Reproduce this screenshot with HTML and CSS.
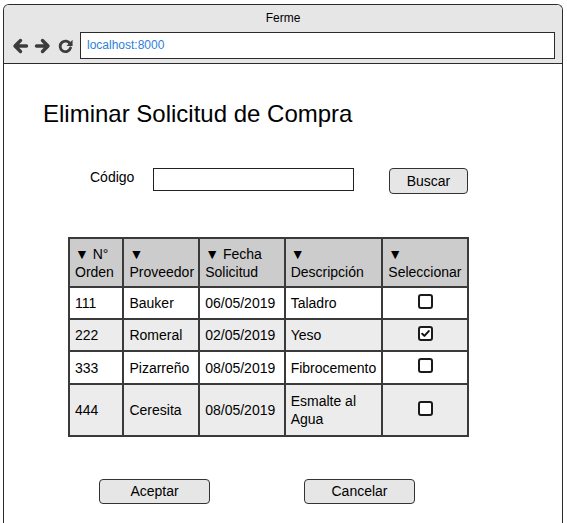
FILE: index.html
```html
<!DOCTYPE html>
<html lang="es">
<head>
<meta charset="utf-8">
<title>Ferme</title>
<link rel="stylesheet" href="styles.css">
</head>
<body>
<div class="window">
  <div class="chrome">
    <div class="win-title">Ferme</div>
    <div class="navrow">
      <div class="navicons">
        <svg class="ico" viewBox="0 0 18 18" width="18" height="18"><path d="M15.5 9H4.5M9.5 3.5L4 9l5.5 5.5" fill="none" stroke="#3c3c3c" stroke-width="3.4" stroke-linecap="round" stroke-linejoin="round"/></svg>
        <svg class="ico" viewBox="0 0 18 18" width="18" height="18"><path d="M2.5 9h11M8.5 3.5L14 9l-5.5 5.5" fill="none" stroke="#3c3c3c" stroke-width="3.4" stroke-linecap="round" stroke-linejoin="round"/></svg>
        <svg class="ico" viewBox="0 0 18 18" width="17" height="18"><path d="M14 7A5.6 5.6 0 1 0 14.3 11" fill="none" stroke="#3c3c3c" stroke-width="3" stroke-linecap="round"/><path d="M16.5 2.5v6.5H10z" fill="#3c3c3c"/></svg>
      </div>
      <div class="address">localhost:8000</div>
    </div>
  </div>
  <div class="content">
    <h1 class="page-title">Eliminar Solicitud de Compra</h1>
    <div class="search-row">
      <label class="code-label">Código</label>
      <div class="code-input"></div>
      <div class="btn btn-search">Buscar</div>
    </div>
    <table class="grid">
      <colgroup>
        <col class="c1"><col class="c2"><col class="c3"><col class="c4"><col class="c5">
      </colgroup>
      <thead>
        <tr>
          <th>▼ N°<br>Orden</th>
          <th>▼<br>Proveedor</th>
          <th>▼ Fecha<br>Solicitud</th>
          <th>▼<br>Descripción</th>
          <th>▼<br>Seleccionar</th>
        </tr>
      </thead>
      <tbody>
        <tr class="r1">
          <td>111</td><td>Bauker</td><td>06/05/2019</td><td>Taladro</td><td class="chk"><span class="box"></span></td>
        </tr>
        <tr class="r2">
          <td>222</td><td>Romeral</td><td>02/05/2019</td><td>Yeso</td><td class="chk"><span class="box checked"><svg viewBox="0 0 10 10" width="10" height="10"><path d="M2 5.2l2 2L8 2.8" fill="none" stroke="#111" stroke-width="1.8" stroke-linecap="round" stroke-linejoin="round"/></svg></span></td>
        </tr>
        <tr class="r3">
          <td>333</td><td>Pizarreño</td><td>08/05/2019</td><td>Fibrocemento</td><td class="chk"><span class="box"></span></td>
        </tr>
        <tr class="r4">
          <td>444</td><td>Ceresita</td><td>08/05/2019</td><td>Esmalte al<br>Agua</td><td class="chk"><span class="box"></span></td>
        </tr>
      </tbody>
    </table>
    <div class="actions">
      <div class="btn btn-action">Aceptar</div>
      <div class="btn btn-action btn-cancel">Cancelar</div>
    </div>
  </div>
</div>
</body>
</html>
```
FILE: styles.css
```css
html, body {
  margin: 0;
  padding: 0;
  background: #ffffff;
  font-family: "Liberation Sans", Arial, sans-serif;
  color: #000;
}
.window {
  margin: 4px 0 0 3px;
  width: 558px;
  height: 540px;
  border: 1px solid #2b2b2b;
  border-bottom: none;
  border-radius: 6px 6px 0 0;
  overflow: hidden;
  box-sizing: content-box;
}
.chrome {
  background: #e6e6e6;
  height: 59px;
  border-bottom: 1px solid #2b2b2b;
  box-sizing: border-box;
  display: flex;
  flex-direction: column;
}
.win-title {
  text-align: center;
  font-size: 12px;
  line-height: 14px;
  padding-top: 6px;
  height: 27px;
  box-sizing: border-box;
}
.navrow {
  display: flex;
  align-items: center;
  padding-left: 7px;
}
.navicons {
  display: flex;
  gap: 5px;
  align-items: center;
  margin-right: 6px;
}
.ico { display: block; }
.address {
  width: 475px;
  height: 27px;
  box-sizing: border-box;
  border: 1px solid #2b2b2b;
  background: #fff;
  color: #2d7fdb;
  font-size: 12px;
  line-height: 25px;
  padding-left: 6px;
}
.content {
  padding: 0;
}
.page-title {
  margin: 36px 0 0 39px;
  font-weight: normal;
  font-size: 24px;
  line-height: 28px;
}
.search-row {
  display: flex;
  align-items: flex-start;
  margin-top: 40px;
  height: 26px;
}
.code-label {
  margin-left: 86px;
  font-size: 14px;
  line-height: 16px;
  padding-top: 1px;
  width: 63px;
}
.code-input {
  width: 201px;
  height: 23px;
  box-sizing: border-box;
  border: 1px solid #222;
  background: #fff;
}
.btn {
  background: #e6e6e6;
  border: 1px solid #333;
  border-radius: 4px;
  box-sizing: border-box;
  text-align: center;
  font-size: 14px;
}
.btn-search {
  margin-left: 35px;
  width: 79px;
  height: 26px;
  line-height: 24px;
}
.grid {
  margin: 43px 0 0 64px;
  border-collapse: collapse;
  width: 401px;
  font-size: 14px;
}
.c1 { width: 55px; }
.c2 { width: 76px; }
.c3 { width: 86px; }
.c4 { width: 98px; }
.c5 { width: 86px; }
.grid th, .grid td {
  border: 2px solid #3a3a3a;
  padding: 0 0 0 5px;
  text-align: left;
  font-weight: normal;
  line-height: 18px;
  vertical-align: middle;
}
.grid thead tr { height: 49px; background: #cccccc; }
.grid th { padding-top: 0; }
.r1, .r3 { background: #ffffff; }
.r2, .r4 { background: #ececec; }
.r1 { height: 32px; }
.r2 { height: 32px; }
.r3 { height: 33px; }
.r4 { height: 52px; }
.grid td.chk {
  text-align: center;
  padding: 0;
}
.box {
  display: inline-block;
  width: 15px;
  height: 15px;
  box-sizing: border-box;
  border: 2px solid #1a1a1a;
  border-radius: 3px;
  background: #fff;
  vertical-align: middle;
  position: relative;
  top: -3px;
}
.box svg {
  display: block;
  width: 11px;
  height: 11px;
}
.actions {
  display: flex;
  margin: 42px 0 0 95px;
  gap: 94px;
}
.btn-action {
  width: 111px;
  height: 25px;
  line-height: 23px;
}
```
